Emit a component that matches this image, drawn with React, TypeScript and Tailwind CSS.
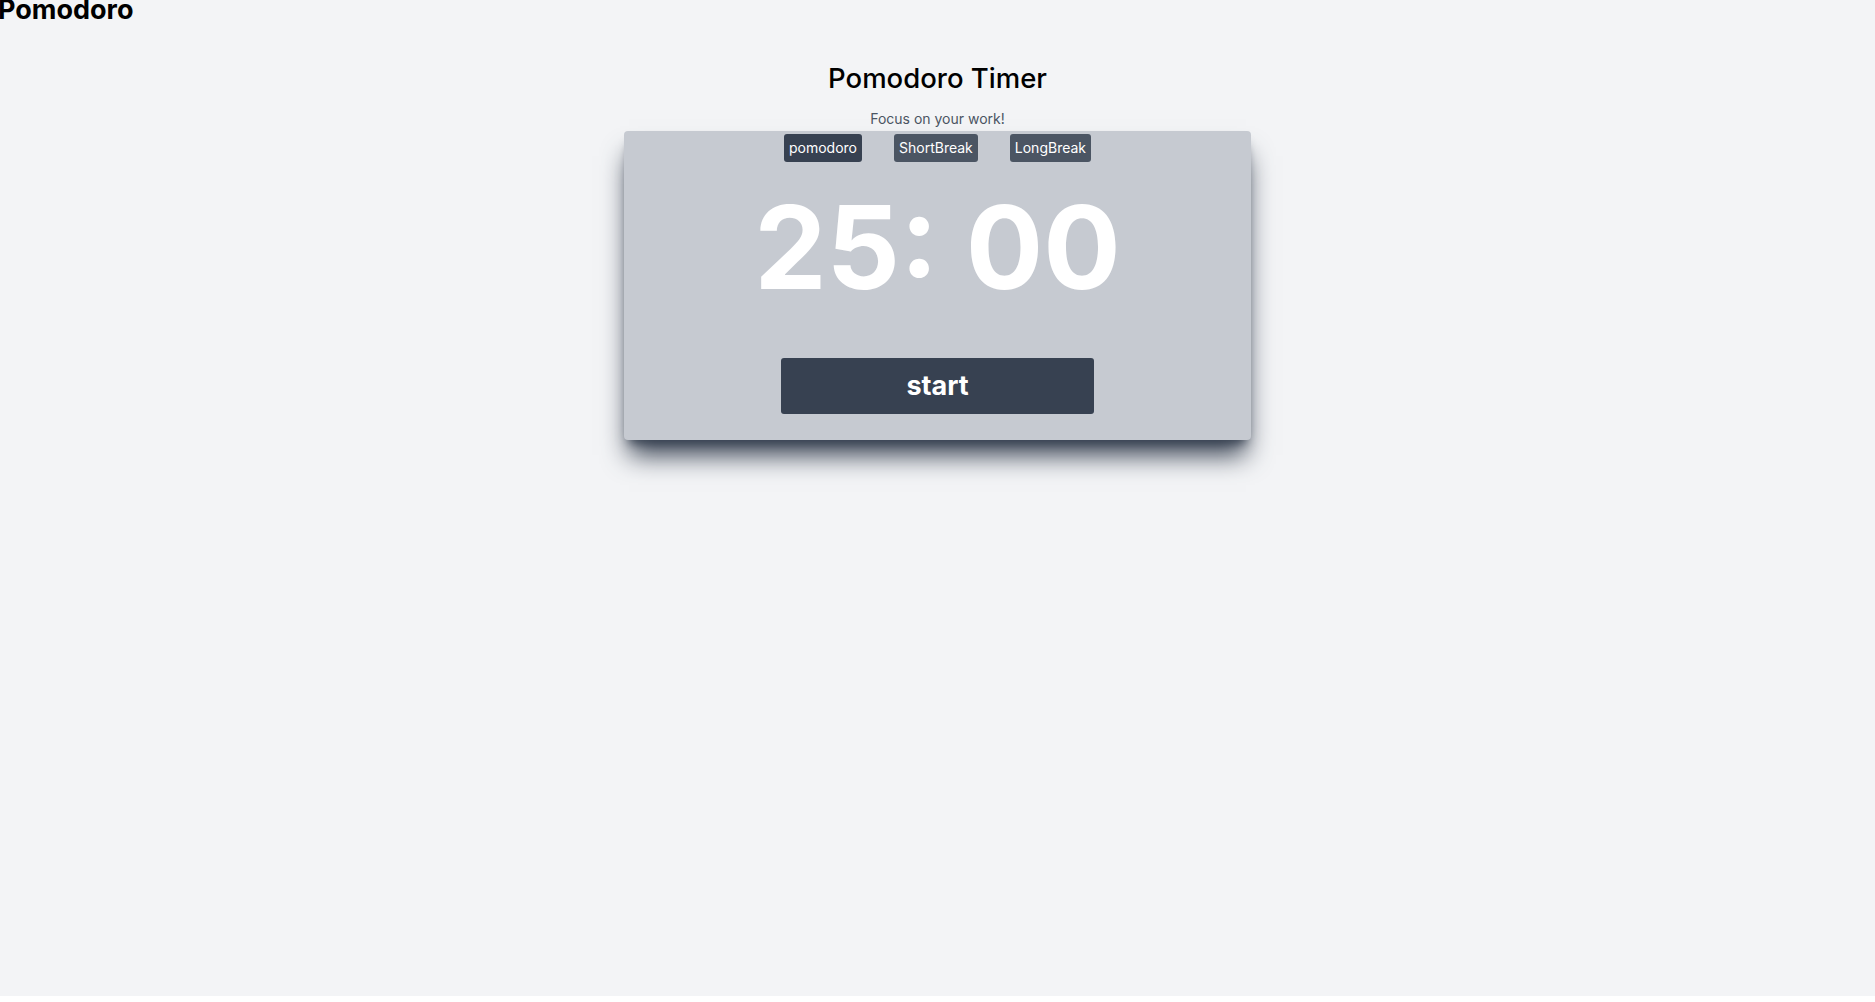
import { useState } from "react";

const modes = ["pomodoro", "ShortBreak", "LongBreak"];

const App = () => {
  const [mode, setMode] = useState("pomodoro");

  return (
    <div className="min-h-screen bg-[#f3f4f6] font-['Inter',sans-serif] text-black">
      <div className="-mt-[6px] -ml-[2px] text-[27px] font-bold leading-[32px]">
        Pomodoro
      </div>

      <div className="flex flex-col items-center">
        <h1 className="mt-[34px] text-[27.5px] font-medium leading-[36px]">
          Pomodoro Timer
        </h1>
        <p className="mt-[13px] text-sm leading-5 text-[#4b5563]">
          Focus on your work!
        </p>

        <div className="mt-[2px] flex h-[309px] w-[627px] flex-col items-center rounded-sm bg-[#c6cad1] shadow-xl shadow-[#374151]">
          <div className="mt-[3px] flex gap-8">
            {modes.map((m) => (
              <button
                key={m}
                onClick={() => setMode(m)}
                className={
                  mode === m
                    ? "h-[28px] rounded-[3px] bg-[#374151] px-[5px] text-sm leading-5 text-white"
                    : "h-[28px] rounded-[3px] bg-[#4b5563] px-[5px] text-sm leading-5 text-white"
                }
              >
                {m}
              </button>
            ))}
          </div>

          <div className="mt-[28px] text-[115px] font-bold leading-none text-white">
            25: 00
          </div>

          <button className="mt-[53px] flex h-[56px] w-[313px] items-center justify-center rounded-[3px] bg-[#374151] text-[27px] font-bold text-white">
            start
          </button>
        </div>
      </div>
    </div>
  );
};

export default App;
